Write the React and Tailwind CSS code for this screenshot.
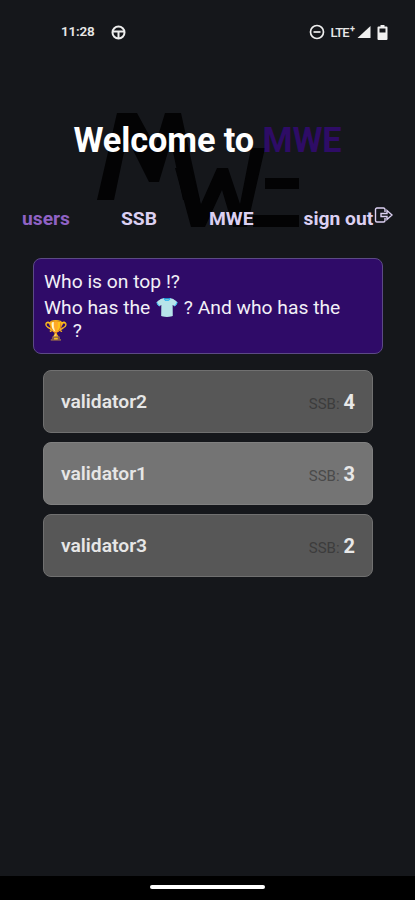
import React from "react";

const font = { fontFamily: "Roboto, sans-serif" };

function StatusBar() {
  return (
    <div className="h-[64px] pl-[61px] pr-[27px] pt-[24px] flex items-start justify-between text-[#e8e8e8] shrink-0">
      <div className="flex items-center gap-[15px] h-[16px]">
        <span className="text-[13.5px] font-semibold leading-none tracking-[-0.2px]">11:28</span>
        <svg width="17" height="17" viewBox="0 0 17 17" fill="none" stroke="#eee" strokeWidth="2">
          <circle cx="8.500" cy="8.500" r="6" />
          <path d="M3 7.500h11M8.500 8v6" />
        </svg>
      </div>
      <div className="flex items-center h-[16px]">
        <svg width="16" height="16" viewBox="0 0 16 16" fill="none" stroke="#eee" strokeWidth="1.700" className="mr-[5px]">
          <circle cx="8" cy="8" r="6.500" />
          <path d="M4.500 8h7" />
        </svg>
        <span className="text-[13px] font-medium leading-none tracking-[-0.7px]">LTE</span>
        <span className="text-[9px] font-bold leading-none mb-[5px] w-[8px] pl-[1px]">+</span>
        <svg width="14" height="14" viewBox="0 0 14 14" className="mr-[6px]">
          <path d="M13.500 1v12H.500z" fill="#f0f0f0" />
        </svg>
        <svg width="11" height="15" viewBox="0 0 11 15">
          <path d="M3.500 0h4v1.500H9.500a1 1 0 0 1 1 1V14a1 1 0 0 1-1 1h-8a1 1 0 0 1-1-1V2.500a1 1 0 0 1 1-1h2z" fill="#f0f0f0" />
          <rect x="2.500" y="3.500" width="6" height="4" fill="#15171b" />
        </svg>
      </div>
    </div>
  );
}

function Logo() {
  return (
    <svg className="absolute left-[85px] top-[36px]" width="230" height="130" viewBox="0 0 230 130" fill="#030304">
      <path d="M12 100 L32 13 L52 13 L70 46 L80 13 L96 13 L115 100 H98 L86 42 L74 82 H64 L42 38 L29 100 Z" />
      <path d="M90 68 L105 68 L116 104 L132 68 L143 68 L155 104 L166 48 L180 48 L162 127 H148 L137 90 L120 127 H106 Z" />
      <rect x="180" y="78" width="34" height="11" />
      <rect x="168" y="115" width="46" height="12" />
    </svg>
  );
}

function Row({ name, score, light }) {
  return (
    <div
      className={`h-[63px] rounded-[8px] border flex items-center justify-between pl-[17px] pr-[17px] ${
        light ? "bg-[#747474] border-[#808080]" : "bg-[#575757] border-[#707070]"
      }`}
    >
      <span className="text-[19.250px] font-semibold text-[#e6e6e6] pt-[2px]">{name}</span>
      <span className="flex items-baseline gap-[4px]">
        <span className={`text-[15px] ${light ? "text-[#4a4a4a]" : "text-[#3c3c3c]"}`}>SSB:</span>
        <span className="text-[20px] font-bold text-[#e8e8e8]">{score}</span>
      </span>
    </div>
  );
}

export default function App() {
  return (
    <div className="w-[415px] h-[900px] bg-[#15171b] flex flex-col overflow-hidden" style={font}>
      <StatusBar />
      <div className="flex-1 flex flex-col">
        <div className="relative pt-[53px]">
          <Logo />
          <h1 className="relative text-center text-[34.300px] font-bold leading-[46px] text-white tracking-[-0.1px]">
            Welcome to <span className="text-[#2e0c66]">MWE</span>
          </h1>
          <nav className="relative mt-[44px] h-[24px] flex items-center text-[19.250px] font-bold leading-[24px]">
            <span className="ml-[22px] text-[#8f62c4]">users</span>
            <span className="ml-[51px] text-[#dcd0f2]">SSB</span>
            <span className="ml-[52px] text-[#dcd0f2]">MWE</span>
            <span className="ml-[50px] text-[#dcd0f2]">sign out</span>
            <svg className="mb-[6px] ml-[1px]" width="19" height="18" viewBox="0 0 19 18" fill="none" stroke="#dcd0f2" strokeWidth="1.400">
              <path d="M11 5V2.500A1.500 1.500 0 0 0 9.500 1H3A1.500 1.500 0 0 0 1.500 2.500v11A1.500 1.500 0 0 0 3 15h6.500a1.500 1.500 0 0 0 1.500-1.500V11" />
              <path d="M7 6.500h6V3.500L18 8l-5 4.500V9.500H7z" />
            </svg>
          </nav>
        </div>

        <div className="mt-[27px] ml-[33px] mr-[32px] h-[96px] rounded-[8px] border border-[#5c4a85] bg-[#2f0b68] px-[10px] pt-[11px] text-[19.250px] leading-[24px] text-[#f2f0f7]">
          <p>Who is on top !?</p>
          <p className="mt-[2px]">
            Who has the <span style={{ fontFamily: "'Noto Color Emoji', sans-serif" }}>👕</span> ? And who has the
          </p>
          <p className="-mt-[1px]">
            <span style={{ fontFamily: "'Noto Color Emoji', sans-serif" }}>🏆</span> ?
          </p>
        </div>

        <div className="mt-[16px] ml-[43px] mr-[42px] flex flex-col gap-[9px]">
          <Row name="validator2" score="4" />
          <Row name="validator1" score="3" light />
          <Row name="validator3" score="2" />
        </div>
      </div>
      <div className="h-[24px] bg-black flex justify-center items-start shrink-0 pt-[9px]">
        <div className="w-[115px] h-[4px] rounded-full bg-white" />
      </div>
    </div>
  );
}
